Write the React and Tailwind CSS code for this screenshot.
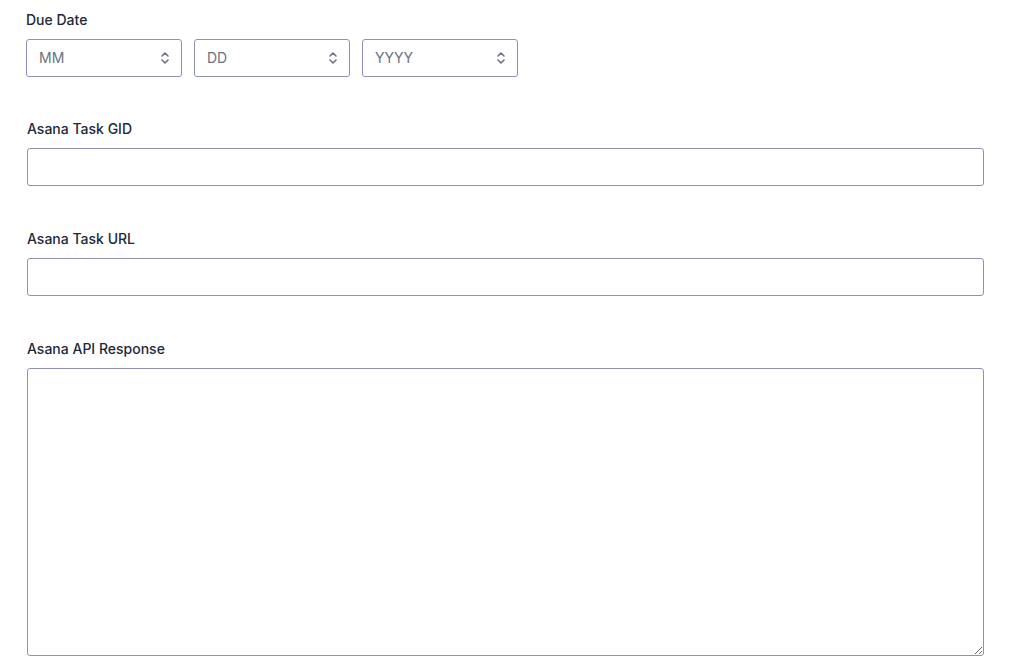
import React from "react";

const Chevrons = () => (
  <svg width="10" height="16" viewBox="0 0 10 16" fill="none" className="pointer-events-none absolute right-[12px] top-1/2 -translate-y-1/2">
    <path d="M2 6 L5 3 L8 6" stroke="#6b7280" strokeWidth="1.6" strokeLinecap="round" strokeLinejoin="round" />
    <path d="M2 10 L5 13 L8 10" stroke="#6b7280" strokeWidth="1.6" strokeLinecap="round" strokeLinejoin="round" />
  </svg>
);

const DateSelect = ({ placeholder }) => (
  <div className="relative w-[156px]">
    <select
      defaultValue=""
      className="appearance-none w-full h-[38px] rounded-[3px] border border-[#8f90b5] bg-white pl-[12px] pr-8 pb-[2px] text-[14px] text-[#6b7280] outline-none"
    >
      <option value="" disabled>
        {placeholder}
      </option>
    </select>
    <Chevrons />
  </div>
);

const Label = ({ children }) => (
  <label className="block h-[20px] leading-[20px] mb-[9px] text-[14px] font-medium text-[#1d2939]">
    {children}
  </label>
);

export default function App() {
  return (
    <div
      className="bg-white w-[1012px] h-[663px] overflow-hidden pt-[10px] pl-[26px] pr-[28px]"
      style={{ fontFamily: "Inter, 'Noto Sans', sans-serif" }}
    >
      {/* DUE DATE */}
      <div>
        <Label>Due Date</Label>
        <div className="flex gap-[12px]">
          <DateSelect placeholder="MM" />
          <DateSelect placeholder="DD" />
          <DateSelect placeholder="YYYY" />
        </div>
      </div>

      {/* GID */}
      <div className="mt-[42px] pl-[1px]">
        <Label>Asana Task GID</Label>
        <input className="block w-full h-[38px] rounded-[3px] border border-[#8f90b5] bg-white outline-none" />
      </div>

      {/* URL */}
      <div className="mt-[43px] pl-[1px]">
        <Label>Asana Task URL</Label>
        <input className="block w-full h-[38px] rounded-[3px] border border-[#8f90b5] bg-white outline-none" />
      </div>

      {/* RESPONSE */}
      <div className="mt-[43px] pl-[1px]">
        <Label>Asana API Response</Label>
        <textarea className="block w-full h-[288px] rounded-[3px] border border-[#8f90b5] bg-white outline-none" />
      </div>
    </div>
  );
}
